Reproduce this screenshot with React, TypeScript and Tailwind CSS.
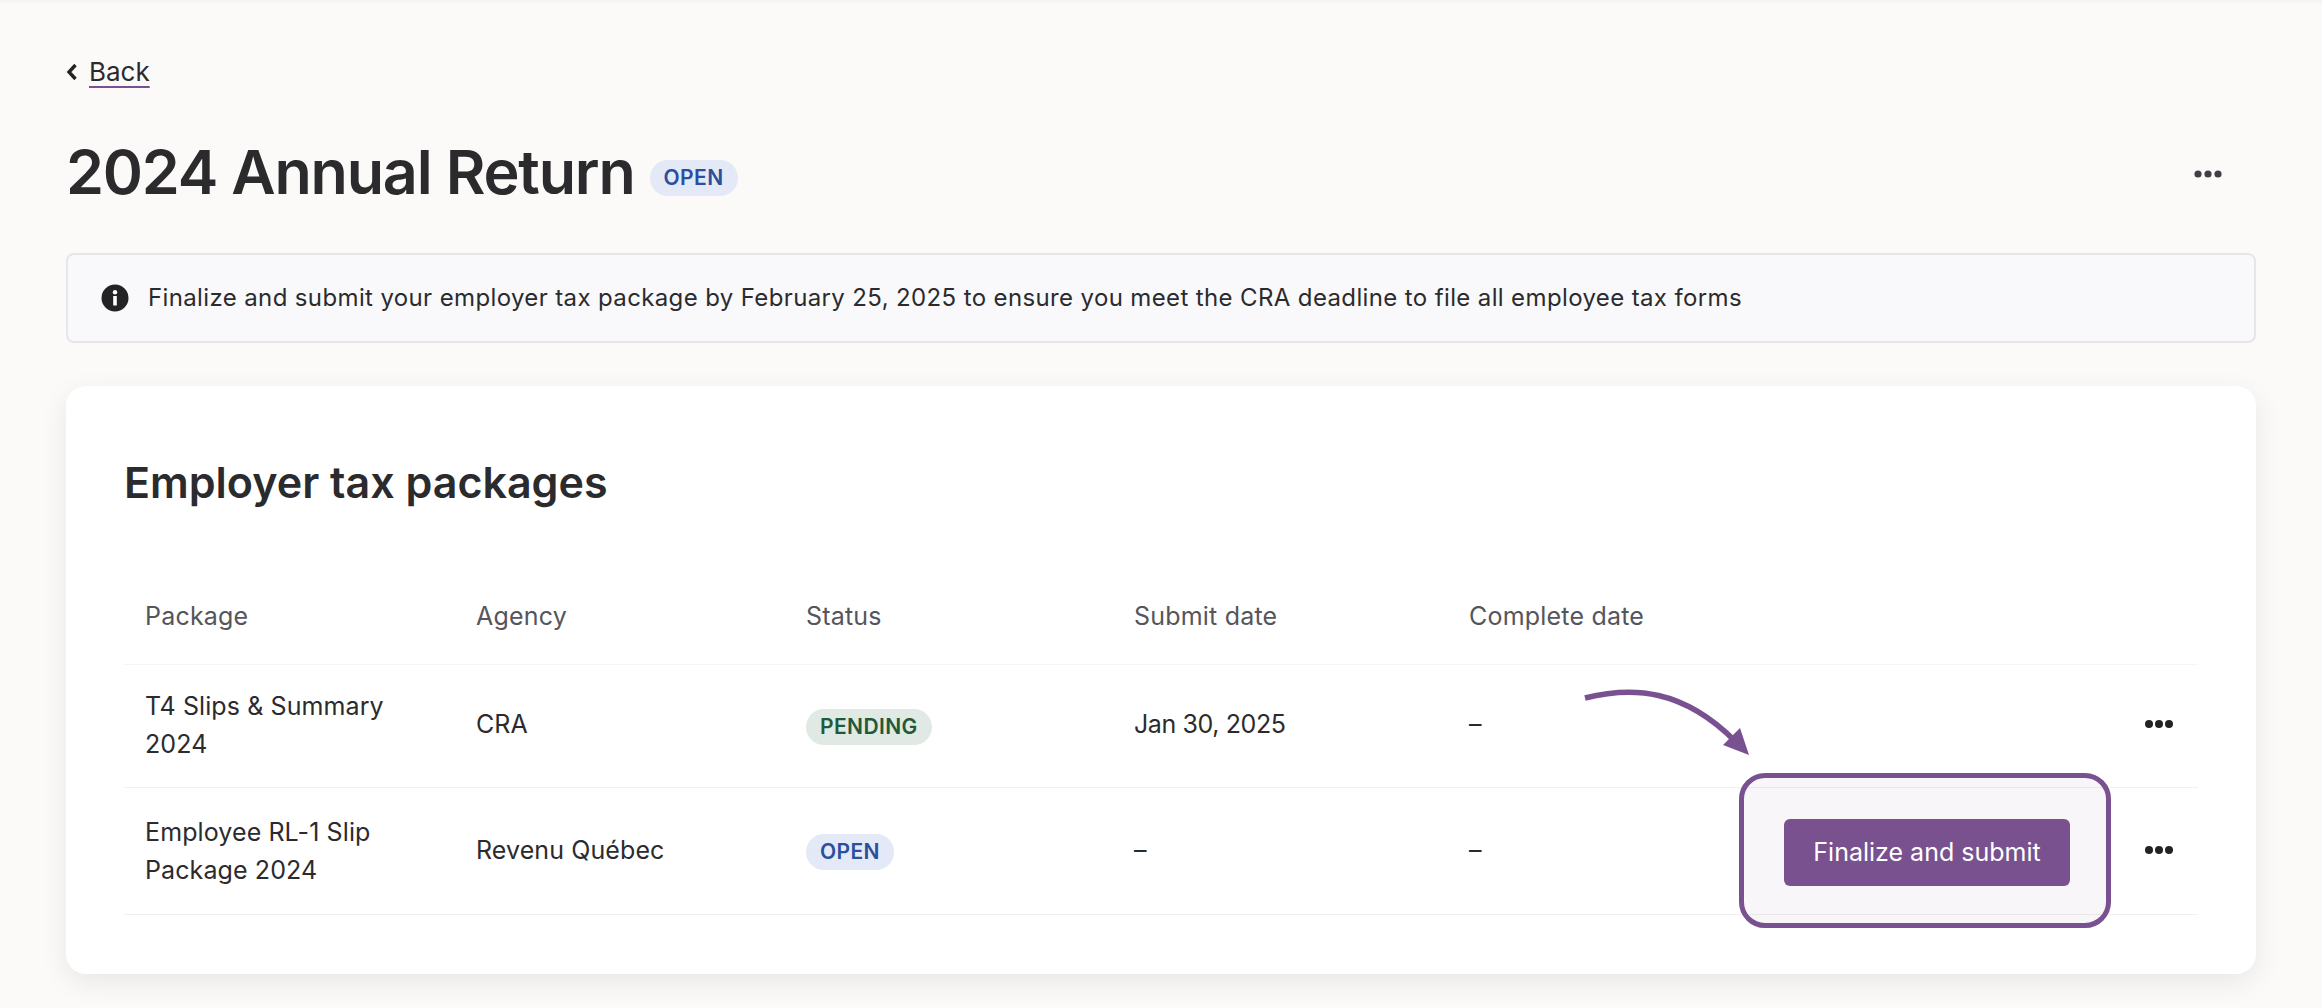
import React from "react";

function Dots({ color, size }: { color: string; size: "lg" | "sm" }) {
  const r = size === "lg" ? 4 : 3.6;
  return (
    <svg width="28" height="8" viewBox="0 0 28 8" className={color}>
      <circle cx="4" cy="4" r={r} fill="currentColor" />
      <circle cx="14" cy="4" r={r} fill="currentColor" />
      <circle cx="24" cy="4" r={r} fill="currentColor" />
    </svg>
  );
}

function Badge({ text, cls }: { text: string; cls: string }) {
  return (
    <span className={`inline-flex h-[36px] items-center rounded-full px-[14px] text-[21px] font-semibold tracking-[0.4px] ${cls}`}>{text}</span>
  );
}

function Row({
  pkg,
  agency,
  badge,
  submit,
  height,
  lift,
  dots,
}: {
  pkg: string[];
  agency: string;
  badge: React.ReactNode;
  submit: string;
  height: string;
  lift: string;
  dots: string;
}) {
  return (
    <div className={`grid grid-cols-[352px_330px_328px_335px_1fr_53px] items-center border-b border-[#f1f0ef] text-[25px] tracking-[0.1px] text-[#2b2b2e] ${height}`}>
      <div className={`pl-[21px] leading-[38px] ${lift}`}>
        {pkg.map((l) => (
          <div key={l}>{l}</div>
        ))}
      </div>
      <div className={lift}>{agency}</div>
      <div>{badge}</div>
      <div className={`tracking-[-0.4px] ${lift}`}>{submit}</div>
      <div className={lift}>–</div>
      <div className={`flex ${dots}`}>
        <Dots color="text-[#232326]" size="lg" />
      </div>
    </div>
  );
}

export default function App() {
  return (
    <div className="relative h-[1008px] w-[2322px] overflow-hidden bg-[#fbfaf8] px-[66px] font-['Inter',sans-serif] text-[#2b2b2e] shadow-[inset_0_4px_4px_-2px_rgba(0,0,0,0.03)]">
      <div className="flex h-[141px] items-start pt-[56px]">
        <svg width="12" height="32" viewBox="0 0 12 32" className="mr-[11px]">
          <path d="M9.5 9 L3 16 L9.5 23" fill="none" stroke="#232326" strokeWidth="3.4" />
        </svg>
        <a className="text-[26px] leading-[32px] underline decoration-[#7a5190] decoration-2 underline-offset-[5px]">Back</a>
      </div>
      <div className="flex h-[63px] items-center">
        <h1 className="text-[61px] font-semibold leading-[63px] tracking-[-1.2px]">2024 Annual Return</h1>
        <Badge text="OPEN" cls="ml-[15px] mt-[10px] bg-[#e4e9f8] text-[#2b4f9c]" />
        <div className="ml-auto mr-[34px] flex pt-[2px]">
          <Dots color="text-[#3f3f46]" size="sm" />
        </div>
      </div>
      <div className="mt-[49px] flex h-[90px] items-center gap-[19px] rounded-[8px] border-2 border-[#e6e5ea] bg-[#f9f9fb] pl-[33px] text-[24px] tracking-[0.37px]">
        <svg width="28" height="28" viewBox="0 0 28 28">
          <circle cx="14" cy="14" r="13.5" fill="#232326" />
          <rect x="12.2" y="12" width="3.6" height="9.5" fill="#fff" />
          <circle cx="14" cy="8.2" r="2.2" fill="#fff" />
        </svg>
        <span>Finalize and submit your employer tax package by February 25, 2025 to ensure you meet the CRA deadline to file all employee tax forms</span>
      </div>
      <div className="relative mt-[43px] h-[588px] rounded-[20px] bg-white px-[58px] shadow-[0_8px_28px_rgba(0,0,0,0.08)]">
        <h2 className="pt-[70px] text-[43px] font-semibold leading-[52px]">Employer tax packages</h2>
        <div className="mt-[93px] grid h-[64px] grid-cols-[352px_330px_328px_335px_1fr] items-start border-b border-[#f6f5f4] text-[25px] leading-[30px] tracking-[0.2px] text-[#55555c]">
          <div className="pl-[21px]">Package</div>
          <div>Agency</div>
          <div>Status</div>
          <div>Submit date</div>
          <div>Complete date</div>
        </div>
        <Row
          height="h-[123px]"
          lift="pb-[3px]"
          dots="pb-[4px]"
          pkg={["T4 Slips & Summary", "2024"]}
          agency="CRA"
          submit="Jan 30, 2025"
          badge={<Badge text="PENDING" cls="bg-[#e1e9e4] text-[#1f5a3a]" />}
        />
        <Row
          height="h-[127px]"
          lift="pb-0"
          dots="pb-[2px]"
          pkg={["Employee RL-1 Slip", "Package 2024"]}
          agency="Revenu Québec"
          submit="–"
          badge={<Badge text="OPEN" cls="bg-[#e4e9f8] text-[#2b4f9c]" />}
        />
        <svg className="absolute left-[1505px] top-[297px]" width="190" height="80" viewBox="0 0 190 80" fill="none">
          <path d="M14 15 C 62 3, 112 6, 164 58" stroke="#7a5190" strokeWidth="5.5" fill="none" />
          <polygon points="169,45 178,72 152,62" fill="#7a5190" />
        </svg>
        <div className="absolute left-[1673px] top-[387px] flex h-[155px] w-[372px] items-center justify-center rounded-[26px] border-[5px] border-[#7a5190] bg-[rgba(122,81,144,0.05)]">
          <button className="ml-[4px] mt-[4px] flex h-[67px] w-[286px] items-center justify-center rounded-[6px] bg-[#79518f] text-[25px] text-white">Finalize and submit</button>
        </div>
      </div>
    </div>
  );
}
